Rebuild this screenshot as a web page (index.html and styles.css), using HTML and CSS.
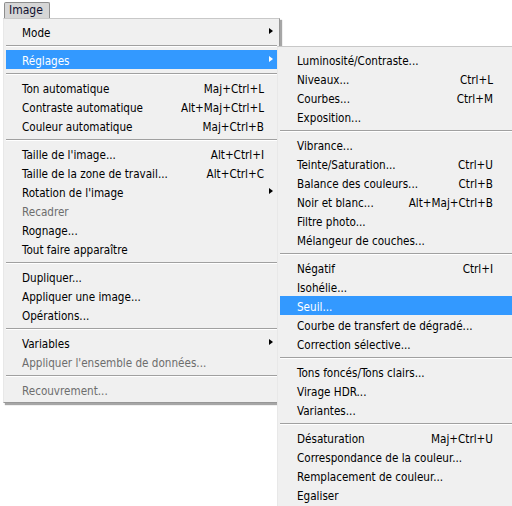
FILE: index.html
```html
<!DOCTYPE html>
<html>
<head>
<meta charset="utf-8">
<link rel="stylesheet" href="styles.css">
</head>
<body>
<div class="menubar"><span class="menu-title">Image</span></div>

<div class="menu main">
  <div class="item"><span class="label">Mode</span><span class="key"></span><span class="arrow"></span></div>
  <div class="sep"></div>
  <div class="item active"><span class="label">Réglages</span><span class="key"></span><span class="arrow"></span></div>
  <div class="sep"></div>
  <div class="item"><span class="label">Ton automatique</span><span class="key">Maj+Ctrl+L</span></div>
  <div class="item"><span class="label">Contraste automatique</span><span class="key">Alt+Maj+Ctrl+L</span></div>
  <div class="item"><span class="label">Couleur automatique</span><span class="key">Maj+Ctrl+B</span></div>
  <div class="sep"></div>
  <div class="item"><span class="label">Taille de l'image...</span><span class="key">Alt+Ctrl+I</span></div>
  <div class="item"><span class="label">Taille de la zone de travail...</span><span class="key">Alt+Ctrl+C</span></div>
  <div class="item"><span class="label">Rotation de l'image</span><span class="key"></span><span class="arrow"></span></div>
  <div class="item disabled"><span class="label">Recadrer</span></div>
  <div class="item"><span class="label">Rognage...</span></div>
  <div class="item"><span class="label">Tout faire apparaître</span></div>
  <div class="sep"></div>
  <div class="item"><span class="label">Dupliquer...</span></div>
  <div class="item"><span class="label">Appliquer une image...</span></div>
  <div class="item"><span class="label">Opérations...</span></div>
  <div class="sep"></div>
  <div class="item"><span class="label">Variables</span><span class="key"></span><span class="arrow"></span></div>
  <div class="item disabled"><span class="label">Appliquer l'ensemble de données...</span></div>
  <div class="sep"></div>
  <div class="item disabled"><span class="label">Recouvrement...</span></div>
</div>

<div class="menu sub">
  <div class="item"><span class="label">Luminosité/Contraste...</span></div>
  <div class="item"><span class="label">Niveaux...</span><span class="key">Ctrl+L</span></div>
  <div class="item"><span class="label">Courbes...</span><span class="key">Ctrl+M</span></div>
  <div class="item"><span class="label">Exposition...</span></div>
  <div class="sep"></div>
  <div class="item"><span class="label">Vibrance...</span></div>
  <div class="item"><span class="label">Teinte/Saturation...</span><span class="key">Ctrl+U</span></div>
  <div class="item"><span class="label">Balance des couleurs...</span><span class="key">Ctrl+B</span></div>
  <div class="item"><span class="label">Noir et blanc...</span><span class="key">Alt+Maj+Ctrl+B</span></div>
  <div class="item"><span class="label">Filtre photo...</span></div>
  <div class="item"><span class="label">Mélangeur de couches...</span></div>
  <div class="sep"></div>
  <div class="item"><span class="label">Négatif</span><span class="key">Ctrl+I</span></div>
  <div class="item"><span class="label">Isohélie...</span></div>
  <div class="item active"><span class="label">Seuil...</span></div>
  <div class="item"><span class="label">Courbe de transfert de dégradé...</span></div>
  <div class="item"><span class="label">Correction sélective...</span></div>
  <div class="sep"></div>
  <div class="item"><span class="label">Tons foncés/Tons clairs...</span></div>
  <div class="item"><span class="label">Virage HDR...</span></div>
  <div class="item"><span class="label">Variantes...</span></div>
  <div class="sep"></div>
  <div class="item"><span class="label">Désaturation</span><span class="key">Maj+Ctrl+U</span></div>
  <div class="item"><span class="label">Correspondance de la couleur...</span></div>
  <div class="item"><span class="label">Remplacement de couleur...</span></div>
  <div class="item"><span class="label">Egaliser</span></div>
</div>
</body>
</html>
```
FILE: styles.css
```css
html, body {
  margin: 0;
  padding: 0;
  background: #ffffff;
  width: 512px;
  height: 506px;
  overflow: hidden;
}
body {
  position: relative;
  font-family: "DejaVu Sans", sans-serif;
  font-stretch: condensed;
  font-size: 11.6px;
  color: #000;
}
.menubar {
  padding: 2px 0 0 4px;
  height: 16px;
}
.menu-title {
  display: inline-block;
  box-sizing: border-box;
  width: 46px;
  height: 17px;
  line-height: 15px;
  padding-left: 4px;
  background: #d6d6d6;
  border: 1px solid #8e8e8e;
  border-bottom: none;
  border-radius: 2px 2px 0 0;
  color: #101030;
  font-size: 12px;
}
.menu {
  position: absolute;
  box-sizing: border-box;
  background: #f0f0f0;
  border: 1px solid #979797;
  border-top-color: #c8c8c8;
  border-left-color: #e8e8e8;
  padding: 3px 2px;
  box-shadow: 2px 2px 1px rgba(0, 0, 0, 0.35);
}
.main {
  left: 3px;
  top: 18px;
  width: 277px;
}
.sub {
  left: 277px;
  top: 46px;
  width: 245px;
}
.item {
  display: flex;
  align-items: center;
  box-sizing: border-box;
  height: 19px;
  padding-top: 2px;
  padding-left: 17px;
  white-space: nowrap;
}
.main .item {
  padding-left: 16px;
  padding-right: 0;
}
.sub .item {
  padding-left: 17px;
  padding-right: 26px;
}
.label {
  flex: 1;
}
.main .key {
  padding-right: 13px;
}
.arrow {
  width: 0;
  height: 0;
  border-top: 3.5px solid transparent;
  border-bottom: 3.5px solid transparent;
  border-left: 4px solid #000;
  margin-right: 4px;
  margin-left: -4px;
  position: relative;
  top: -2px;
}
.active {
  background: #3399ff;
  color: #fff;
}
.active .arrow {
  border-left-color: #fff;
}
.disabled {
  color: #6d6d6d;
}
.sep {
  height: 9px;
  display: flex;
  flex-direction: column;
  justify-content: center;
}
.sep::before {
  content: "";
  display: block;
  height: 1px;
  background: #a0a0a0;
  border-bottom: 1px solid #ffffff;
}
```
